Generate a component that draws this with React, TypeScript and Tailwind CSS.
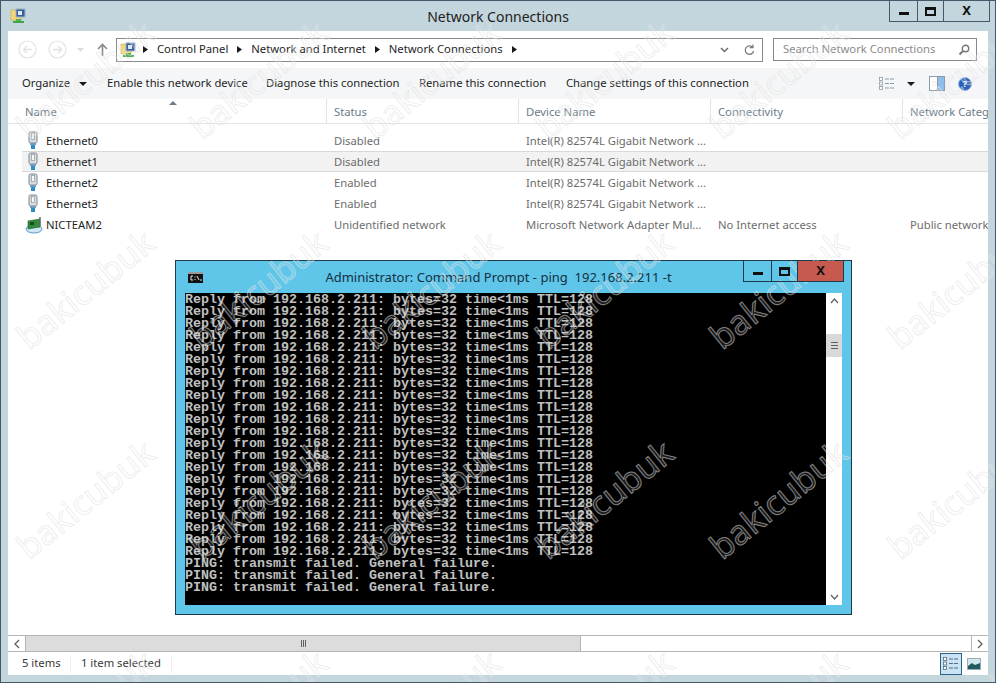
const replyLine = "Reply from 192.168.2.211: bytes=32 time<1ms TTL=128"
const failLine = "PING: transmit failed. General failure."

const connections = [
  { name: "Ethernet0", status: "Disabled", device: "Intel(R) 82574L Gigabit Network ...", conn: "", cat: "", selected: false, nic: false },
  { name: "Ethernet1", status: "Disabled", device: "Intel(R) 82574L Gigabit Network ...", conn: "", cat: "", selected: true, nic: false },
  { name: "Ethernet2", status: "Enabled", device: "Intel(R) 82574L Gigabit Network ...", conn: "", cat: "", selected: false, nic: false },
  { name: "Ethernet3", status: "Enabled", device: "Intel(R) 82574L Gigabit Network ...", conn: "", cat: "", selected: false, nic: false },
  { name: "NICTEAM2", status: "Unidentified network", device: "Microsoft Network Adapter Mul...", conn: "No Internet access", cat: "Public network", selected: false, nic: true },
]

// watermark centres, one stamp per column/row
const markCols = [84, 257, 430, 603, 777, 955]
const markRows = [78, 288, 498, 708]

function FolderNetIcon() {
  return (
    <svg width="16" height="17" viewBox="0 0 16 17">
      <path d="M1 3h5l1-1h4v11H1z" fill="#f3d873" stroke="#c9a94a" strokeWidth="0.6" />
      <rect x="6" y="2" width="9" height="8" fill="#3a5f9e" stroke="#9fb4cc" />
      <rect x="8" y="4" width="4" height="4" fill="#dfe9f5" />
      <rect x="6" y="12" width="5" height="2" fill="#4cb050" />
      <rect x="3" y="14" width="11" height="2" fill="#3fa548" />
    </svg>
  )
}

function PlugIcon() {
  return (
    <svg width="14" height="19" viewBox="0 0 14 19" className="shrink-0">
      <rect x="3" y="1" width="8" height="11" rx="1.5" fill="#d9dde0" stroke="#7d8790" />
      <rect x="5.5" y="2.5" width="3" height="6" fill="#f5f7f8" stroke="#8c959c" strokeWidth="0.7" />
      <rect x="4" y="12" width="6" height="2" fill="#6f9cc0" />
      <rect x="5" y="14" width="4" height="4" fill="#2b8ec4" />
    </svg>
  )
}

function NicIcon() {
  return (
    <svg width="18" height="18" viewBox="0 0 18 18" className="shrink-0">
      <ellipse cx="9" cy="13" rx="8" ry="4" fill="#cfe6f5" stroke="#5a9cc8" />
      <path d="M3 5l12-2v8l-12 2z" fill="#2f8a3c" stroke="#1f5f2a" strokeWidth="0.6" />
      <rect x="5" y="6" width="4" height="3" fill="#174a20" />
      <path d="M15 1v9" stroke="#666" strokeWidth="1.4" />
    </svg>
  )
}

function NavCircle({ dir }: { dir: "left" | "right" }) {
  return (
    <svg width="19" height="19" viewBox="0 0 19 19">
      <circle cx="9.5" cy="9.5" r="8.5" fill="none" stroke="#e2e2e2" strokeWidth="1.2" />
      <path
        d={dir === "left" ? "M14 9.5H6M9 6L5.5 9.5 9 13" : "M5 9.5h8M10 6l3.5 3.5L10 13"}
        fill="none"
        stroke="#e2e2e2"
        strokeWidth="1.4"
      />
    </svg>
  )
}

function Crumb({ label }: { label: string }) {
  return (
    <>
      <span>{label}</span>
      <svg width="5" height="7" viewBox="0 0 5 7"><path d="M0 0l5 3.5L0 7z" fill="#1a1a1a" /></svg>
    </>
  )
}

function DetailsIcon({ color }: { color: string }) {
  return (
    <svg width="16" height="13" viewBox="0 0 16 13">
      {[0, 4.5, 9].map((y) => (
        <g key={y}>
          <rect x="0.5" y={y + 0.5} width="3" height="3" fill="#fff" stroke={color} strokeWidth="0.8" />
          <path d={`M6 ${y + 2}h4M11 ${y + 2}h4`} stroke={color} strokeWidth="1" />
        </g>
      ))}
    </svg>
  )
}

function CmdIcon() {
  return (
    <svg width="15" height="11" viewBox="0 0 15 11" className="shrink-0">
      <rect width="15" height="11" fill="#111" />
      <rect x="0" y="0" width="15" height="2" fill="#9a9a9a" />
      <path d="M5 4H3v4h2M7 4.5v1M7 7v1M9 4l2 4M12 8h2" fill="none" stroke="#e8e8e8" strokeWidth="1" />
    </svg>
  )
}

function CmdWindow() {
  return (
    <div className="absolute left-[174px] top-[259px] flex h-[355px] w-[677px] flex-col border border-[#1d3a4a] bg-[#5fc6ea]">
      <div className="relative flex h-[32px] shrink-0 items-start pl-[12px] pt-[11px]">
        <CmdIcon />
        <div className="absolute left-0 right-[30px] top-[7px] text-center text-[13px] text-[#14303f]">
          Administrator: Command Prompt - ping&nbsp; 192.168.2.211 -t
        </div>
        <div className="absolute right-[7px] top-0 z-10 flex h-[21px] border border-t-0 border-[#1d3a4a]">
          <div className="flex w-[28px] items-center justify-center border-r border-[#1d3a4a]">
            <div className="mt-[5px] h-[3px] w-[10px] bg-[#111]" />
          </div>
          <div className="flex w-[26px] items-center justify-center border-r border-[#1d3a4a]">
            <div className="h-[9px] w-[11px] border-[2px] border-t-[3px] border-[#111]" />
          </div>
          <div className="flex w-[45px] items-center justify-center bg-[#c75a4e] text-[13px] font-bold text-[#111]">
            X
          </div>
        </div>
      </div>
      <div className="ml-[9px] flex h-[312px] w-[657px]">
        <div className="w-[641px] bg-black pt-[1px] font-['Liberation_Mono',monospace] text-[13.33px] font-bold leading-[12px] text-[#c0c0c0]">
          {Array.from({ length: 22 }, (_, i) => (
            <div key={i} className="whitespace-pre">{replyLine}</div>
          ))}
          {[0, 1, 2].map((i) => (
            <div key={i} className="whitespace-pre">{failLine}</div>
          ))}
        </div>
        <div className="flex w-[16px] flex-col bg-white">
          <div className="flex h-[16px] items-center justify-center">
            <svg width="9" height="6" viewBox="0 0 9 6"><path d="M1 5l3.5-4L8 5" fill="none" stroke="#606060" strokeWidth="1.2" /></svg>
          </div>
          <div className="mt-[25px] flex h-[23px] items-center justify-center bg-[#d9d9d9]">
            <div className="h-[7px] w-[7px] border-y-[1.5px] border-[#606060] bg-[linear-gradient(#d9d9d9_40%,#606060_40%,#606060_60%,#d9d9d9_60%)]" />
          </div>
          <div className="mt-auto flex h-[16px] items-center justify-center">
            <svg width="9" height="6" viewBox="0 0 9 6"><path d="M1 1l3.5 4L8 1" fill="none" stroke="#606060" strokeWidth="1.2" /></svg>
          </div>
        </div>
      </div>
    </div>
  )
}

export default function App() {
  return (
    <div className="relative flex h-[683px] w-[996px] flex-col overflow-hidden border border-[#45596a] bg-[#c3d6dd] font-['Noto_Sans',sans-serif] text-[11.25px] text-[#1e1e1e]">
      {/* title bar */}
      <div className="relative flex h-[30px] shrink-0 pl-[9px] pt-[6px]">
        <FolderNetIcon />
        <div className="absolute inset-x-0 top-[5px] text-center text-[14px] text-[#222]">Network Connections</div>
        <div className="absolute right-[5px] top-0 flex h-[21px] border border-t-0 border-[#45596a]">
          <div className="flex w-[28px] items-center justify-center border-r border-[#45596a]">
            <div className="mt-[5px] h-[3px] w-[10px] bg-[#111]" />
          </div>
          <div className="flex w-[26px] items-center justify-center border-r border-[#45596a]">
            <div className="h-[9px] w-[11px] border-[2px] border-t-[3px] border-[#111]" />
          </div>
          <div className="flex w-[45px] items-center justify-center text-[13px] font-bold text-[#111]">X</div>
        </div>
      </div>

      <div className="mx-[7px] flex min-h-0 flex-1 flex-col bg-white">
        {/* address row */}
        <div className="flex h-[37px] shrink-0 items-center pl-[10px]">
          <NavCircle dir="left" />
          <div className="ml-[11px]"><NavCircle dir="right" /></div>
          <svg className="ml-[10px]" width="7" height="4" viewBox="0 0 7 4"><path d="M0 0h7L3.5 4z" fill="#dcdcdc" /></svg>
          <svg className="ml-[13px]" width="11" height="13" viewBox="0 0 11 13"><path d="M5.5 13V2M1 6l4.5-4.5L10 6" fill="none" stroke="#8a8a8a" strokeWidth="1.6" /></svg>
          <div className="ml-[8px] flex h-[24px] w-[647px] items-center border border-[#8a8a8a] pl-[3px] pr-[7px]">
            <FolderNetIcon />
            <div className="ml-[7px] flex items-center gap-[9px]">
              <svg width="5" height="7" viewBox="0 0 5 7"><path d="M0 0l5 3.5L0 7z" fill="#1a1a1a" /></svg>
              <Crumb label="Control Panel" />
              <Crumb label="Network and Internet" />
              <Crumb label="Network Connections" />
            </div>
            <svg className="ml-auto" width="9" height="6" viewBox="0 0 9 6"><path d="M1 1l3.5 3.5L8 1" fill="none" stroke="#666" strokeWidth="1.4" /></svg>
            <svg className="ml-[15px]" width="11" height="12" viewBox="0 0 11 12"><path d="M8.8 3.5A4.2 4.2 0 1 0 9.6 7M9 0.5v3.2H5.8" fill="none" stroke="#777" strokeWidth="1.2" /></svg>
          </div>
          <div className="ml-[10px] flex h-[23px] w-[204px] items-center justify-between border border-[#8a8a8a] pl-[9px] pr-[6px] text-[#8a8a8a]">
            <span>Search Network Connections</span>
            <svg width="12" height="12" viewBox="0 0 12 12"><circle cx="7.5" cy="4.5" r="3.2" fill="none" stroke="#777" strokeWidth="1.4" /><path d="M5 7L1.5 10.5" stroke="#777" strokeWidth="1.8" /></svg>
          </div>
        </div>

        {/* command bar */}
        <div className="flex h-[31px] shrink-0 items-center bg-[#f5f6f7] pl-[14px]">
          <div className="flex w-[85px] items-center">
            <span>Organize</span>
            <svg className="ml-[9px]" width="8" height="4" viewBox="0 0 8 4"><path d="M0 0h8L4 4z" fill="#1a1a1a" /></svg>
          </div>
          <div className="w-[159px] whitespace-nowrap">Enable this network device</div>
          <div className="w-[153px] whitespace-nowrap">Diagnose this connection</div>
          <div className="w-[147px] whitespace-nowrap">Rename this connection</div>
          <div className="w-[313px] whitespace-nowrap">Change settings of this connection</div>
          <DetailsIcon color="#8a9aa8" />
          <svg className="ml-[12px]" width="8" height="4" viewBox="0 0 8 4"><path d="M0 0h8L4 4z" fill="#1a1a1a" /></svg>
          <div className="ml-[14px] flex h-[15px] w-[16px] border border-[#8a9aa8] bg-white">
            <div className="ml-auto w-[7px] border-l border-[#8a9aa8] bg-[#8cc0ea]" />
          </div>
          <div className="ml-[13px] flex h-[14px] w-[14px] items-center justify-center rounded-full border border-[#9ab8e0] bg-[#2b62b8] text-[9px] font-bold text-white">?</div>
        </div>

        {/* column headers */}
        <div className="relative grid h-[25px] shrink-0 grid-cols-[319px_192px_192px_192px_85px] border-b border-[#e4e4e4] text-[#6b7a88]">
          <svg className="absolute left-[161px] top-[2px]" width="8" height="4" viewBox="0 0 8 4"><path d="M0 4h8L4 0z" fill="#6b7a88" /></svg>
          {["Name", "Status", "Device Name", "Connectivity", "Network Category"].map((h, i) => (
            <div key={h} className={`flex items-center overflow-hidden whitespace-nowrap pt-[2px] ${i === 0 ? "pl-[17px]" : "pl-[7px]"} ${i < 4 ? "border-r border-[#e4e4e4]" : ""}`}>
              {h}
            </div>
          ))}
        </div>

        {/* list */}
        <div className="flex min-h-0 flex-1 flex-col pl-[14px] pt-[6px]">
          {connections.map((c) => (
            <div
              key={c.name}
              className={`grid h-[21px] grid-cols-[305px_192px_192px_192px_85px] items-center border-y ${c.selected ? "border-[#d9d9d9] bg-[#f2f2f2]" : "border-transparent"}`}
            >
              <div className={`flex items-center text-[#1e1e1e] ${c.nic ? "gap-[3px] pl-[3px]" : "gap-[6px] pl-[4px]"}`}>
                {c.nic ? <NicIcon /> : <PlugIcon />}
                <span className="pt-[2px]">{c.name}</span>
              </div>
              <div className="whitespace-nowrap pl-[7px] pt-[2px] text-[#6d6d6d]">{c.status}</div>
              <div className="whitespace-nowrap pl-[7px] pt-[2px] text-[#6d6d6d]">{c.device}</div>
              <div className="whitespace-nowrap pl-[7px] pt-[2px] text-[#6d6d6d]">{c.conn}</div>
              <div className="overflow-hidden whitespace-nowrap pl-[7px] pt-[2px] text-[#6d6d6d]">{c.cat}</div>
            </div>
          ))}
        </div>

        {/* horizontal scrollbar */}
        <div className="flex h-[17px] shrink-0 border-y border-[#b5b5b5]">
          <div className="flex w-[17px] items-center justify-center">
            <svg width="6" height="10" viewBox="0 0 6 10"><path d="M5 1L1 5l4 4" fill="none" stroke="#606060" strokeWidth="1.3" /></svg>
          </div>
          <div className="flex w-[556px] items-center justify-center gap-[1px] border-x border-[#b5b5b5] bg-[#dcdcdc]">
            <div className="h-[7px] w-[1px] bg-[#606060]" />
            <div className="h-[7px] w-[1px] bg-[#606060]" />
            <div className="h-[7px] w-[1px] bg-[#606060]" />
          </div>
          <div className="ml-auto flex w-[17px] items-center justify-center border-l border-[#b5b5b5]">
            <svg width="6" height="10" viewBox="0 0 6 10"><path d="M1 1l4 4-4 4" fill="none" stroke="#606060" strokeWidth="1.3" /></svg>
          </div>
        </div>

        {/* status bar */}
        <div className="flex h-[23px] shrink-0 items-center pl-[14px] text-[#3a3a3a]">
          <span className="w-[48px]">5 items</span>
          <span className="mr-[10px] h-[18px] w-[1px] bg-[#f0f0f0]" />
          <span className="w-[90px]">1 item selected</span>
          <span className="h-[18px] w-[1px] bg-[#f0f0f0]" />
          <div className="ml-auto flex h-[22px] w-[22px] items-center justify-center border border-[#2f6080] bg-[#c9e2f5]">
            <DetailsIcon color="#556b7a" />
          </div>
          <svg className="ml-[5px] mr-[7px]" width="14" height="12" viewBox="0 0 14 12">
            <rect x="0.5" y="0.5" width="13" height="11" fill="#cfe8ee" stroke="#9ab" />
            <path d="M1 8l4-3 3 2 5-2v6H1z" fill="#1f5a60" />
          </svg>
        </div>
      </div>
      <div className="h-[7px] shrink-0" />

      <CmdWindow />

      {/* watermark */}
      {markRows.flatMap((y) =>
        markCols.map((x) => (
          <div
            key={`${x}-${y}`}
            className="pointer-events-none absolute -translate-x-1/2 -translate-y-1/2 -rotate-[39deg] whitespace-nowrap font-['Noto_Sans',sans-serif] text-[34px] leading-none text-white/10 [-webkit-text-stroke:1px_rgba(225,225,225,0.55)]"
            style={{ left: x, top: y }}
          >
            bakicubuk
          </div>
        )),
      )}
    </div>
  )
}
